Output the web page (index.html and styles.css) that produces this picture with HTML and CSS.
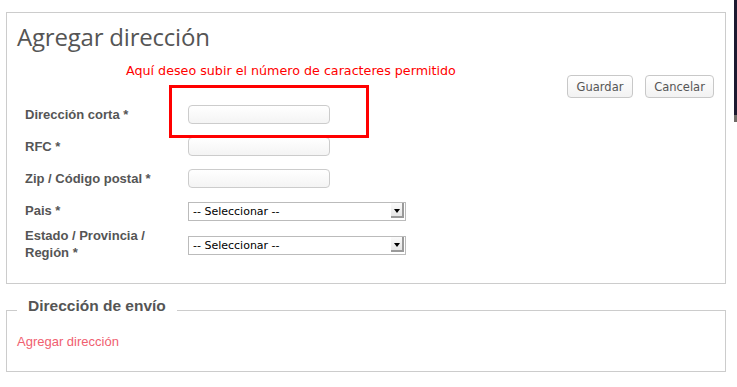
FILE: index.html
```html
<!DOCTYPE html>
<html lang="es">
<head>
    <meta charset="UTF-8">
    <meta name="viewport" content="width=device-width, initial-scale=1.0">
    <title>Agregar dirección</title>
    <link rel="stylesheet" href="styles.css">
</head>
<body>
    <div class="page">
        <div class="content">
            <div class="panel">
                <h1>Agregar dirección</h1>
                <div class="toolbar">
                    <span class="note">Aquí deseo subir el número de caracteres permitido</span>
                    <div class="actions">
                        <button type="button" class="btn btn-save">Guardar</button>
                        <button type="button" class="btn btn-cancel">Cancelar</button>
                    </div>
                </div>
                <div class="highlight"></div>
                <form class="address-form">
                    <div class="form-row">
                        <label for="alias">Dirección corta *</label>
                        <input type="text" id="alias" name="alias">
                    </div>
                    <div class="form-row">
                        <label for="rfc">RFC *</label>
                        <input type="text" id="rfc" name="rfc">
                    </div>
                    <div class="form-row">
                        <label for="zip">Zip / Código postal *</label>
                        <input type="text" id="zip" name="zip">
                    </div>
                    <div class="form-row">
                        <label for="country">Pais *</label>
                        <div class="select-wrap">
                            <select id="country" name="country">
                                <option>-- Seleccionar --</option>
                            </select>
                        </div>
                    </div>
                    <div class="form-row tall">
                        <label for="state">Estado / Provincia /<br>Región *</label>
                        <div class="select-wrap">
                            <select id="state" name="state">
                                <option>-- Seleccionar --</option>
                            </select>
                        </div>
                    </div>
                </form>
            </div>

            <fieldset class="shipping">
                <legend>Dirección de envío</legend>
                <a href="#" class="add-link">Agregar dirección</a>
            </fieldset>
        </div>
        <div class="edge"></div>
    </div>
</body>
</html>
```

FILE: styles.css
```css
body {
    margin: 0;
    background: #fff;
    font-family: "Liberation Sans", Arial, sans-serif;
    color: #555;
}
.page {
    display: flex;
    align-items: flex-start;
}
.content {
    width: 734px;
}
.edge {
    width: 3px;
    height: 115px;
    background: #1d1a30;
    border-bottom: 7px solid #6e6a66;
}
.panel {
    position: relative;
    box-sizing: border-box;
    width: 720px;
    margin: 12px 0 0 6px;
    padding: 9px 10px 21px;
    border: 1px solid #ccc;
}
h1 {
    margin: 0;
    font-family: "Open Sans", sans-serif;
    font-weight: 400;
    font-size: 24px;
    letter-spacing: -0.2px;
    line-height: 30px;
    color: #555;
}
.toolbar {
    display: flex;
    justify-content: space-between;
    align-items: flex-start;
    margin-top: 10px;
}
.note {
    margin-left: 109px;
    font-family: "DejaVu Sans", sans-serif;
    font-size: 12.7px;
    line-height: 18px;
    color: #f00;
}
.actions {
    display: flex;
    gap: 12px;
    margin-top: 13px;
    margin-right: 1px;
}
.btn {
    box-sizing: border-box;
    height: 23px;
    padding: 0;
    font-family: "DejaVu Sans", sans-serif;
    font-size: 11.5px;
    color: #555;
    background: linear-gradient(#fff, #f2f2f2);
    border: 1px solid #c8c8c8;
    border-radius: 4px;
}
.btn-save {
    width: 66px;
}
.btn-cancel {
    width: 69px;
}
.highlight {
    position: absolute;
    left: 162px;
    top: 72px;
    width: 200px;
    height: 53px;
    box-sizing: border-box;
    border: 3px solid #f00;
}
.address-form {
    padding-left: 8px;
}
.form-row {
    display: flex;
    align-items: center;
    height: 32px;
}
.form-row.tall {
    height: 36px;
}
.form-row label {
    width: 163px;
    font-weight: bold;
    font-size: 13px;
    line-height: 17px;
    color: #555;
}
.form-row input {
    box-sizing: border-box;
    width: 142px;
    height: 19px;
    padding: 0 4px;
    border: 1px solid #ccc;
    border-radius: 4px;
    background: linear-gradient(#fff, #f4f4f4);
}
.select-wrap {
    position: relative;
    width: 218px;
    height: 19px;
}
.select-wrap select {
    appearance: none;
    box-sizing: border-box;
    width: 100%;
    height: 19px;
    padding: 0 0 0 4px;
    font-family: "DejaVu Sans", sans-serif;
    font-size: 11px;
    color: #000;
    background: #fff;
    border: 1px solid #bbb;
    border-radius: 0;
}
.select-wrap::after {
    content: "";
    position: absolute;
    top: 2px;
    right: 2px;
    width: 13px;
    height: 15px;
    box-sizing: border-box;
    background: linear-gradient(#fbfbfb, #e6e6e6);
    border-right: 2px solid #9a9a9a;
    border-bottom: 2px solid #9a9a9a;
}
.select-wrap::before {
    content: "";
    position: absolute;
    z-index: 1;
    top: 8px;
    right: 6px;
    border-left: 3px solid transparent;
    border-right: 3px solid transparent;
    border-top: 4px solid #000;
}
.shipping {
    box-sizing: border-box;
    width: 720px;
    margin: 13px 0 0 6px;
    padding: 9px 10px 21px;
    border: 1px solid #ccc;
}
.shipping legend {
    margin-left: 0;
    padding: 0 11px 8px;
    font-weight: bold;
    font-size: 15.5px;
    line-height: 18px;
    color: #555;
}
.add-link {
    font-size: 13px;
    color: #f06070;
    text-decoration: none;
}
```
